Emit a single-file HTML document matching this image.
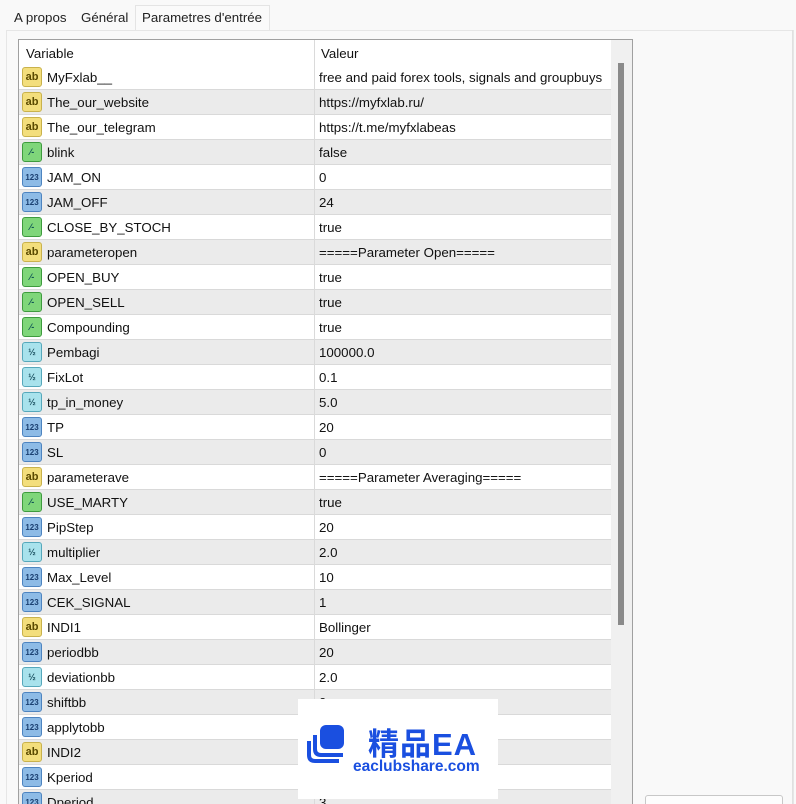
<!DOCTYPE html>
<html><head><meta charset="utf-8"><style>
*{margin:0;padding:0;box-sizing:border-box}
html,body{width:796px;height:804px;overflow:hidden}
body{background:#f9f9f9;font-family:"Liberation Sans","Noto Sans CJK SC",sans-serif;font-size:13.3px;color:#111;position:relative}
.tabs{position:absolute;left:0;top:0;width:796px;height:31px;background:#f9f9f9}
.tab{position:absolute;top:10px;font-size:13.3px;color:#222}
.tab.act{top:5px;height:26px;left:135px;width:135px;background:#fafafa;border:1px solid #e4e4e4;border-bottom:none;padding:4px 0 0 6px}
.panel{position:absolute;left:6px;top:30px;width:788px;height:800px;border:1px solid #e6e6e6;background:#f9f9f9}
.tbl{position:absolute;left:18px;top:39px;width:615px;height:800px;border:1px solid #a0a0a0;background:#fff;overflow:hidden}
.hdr{position:absolute;left:0;top:0;width:592px;height:25px;background:#fff}
.hdr span{position:absolute;top:6px}
.row{position:absolute;left:0;width:592px;height:25px;border-bottom:1px solid #d9d9d9}
.row.g{background:#ebebeb}
.row .n{position:absolute;left:28px;top:5px}
.row .v{position:absolute;left:300px;top:5px}
.vl{position:absolute;left:295px;top:0;width:1px;height:800px;background:#dadada}
.ic{position:absolute;left:3px;top:2px;width:20px;height:20px;border-radius:3px;font-size:9px;font-weight:bold;text-align:center;line-height:19px}
.a{background:#f3de7c;border:1px solid #c9b24c;color:#5a4a00;font-size:11px}
.b{background:#7fd67a;border:1px solid #3e9b3e;color:#155}
.i{background:#8dbbe6;border:1px solid #4d84c0;color:#1a3f70;font-size:8px}
.d{background:#a8e2ec;border:1px solid #56a8bb;color:#1a5060;font-size:9px}
.sb{position:absolute;left:592px;top:0;width:21px;height:800px;background:#f0f0f0}
.th{position:absolute;left:7px;top:23px;width:6px;height:562px;background:#8a8a8a}
.right{position:absolute;left:792px;top:30px;width:1px;height:774px;background:#e0e0e0}
.btn{position:absolute;left:645px;top:795px;width:138px;height:20px;border:1px solid #c8c8c8;border-radius:3px;background:#fdfdfd}
.wm{position:absolute;left:298px;top:699px;width:200px;height:100px;background:#fff}
.wm .t1{position:absolute;left:70px;top:20px;font-size:31px;font-weight:bold;color:#1a4fe0;letter-spacing:1px}
.wm .t2{position:absolute;left:55px;top:59px;font-size:15.5px;font-weight:bold;color:#1a4fe0}
</style></head><body>
<div class="tabs">
<span class="tab" style="left:14px">A propos</span>
<span class="tab" style="left:81px">Général</span>
<div class="tab act">Parametres d'entrée</div>
</div>
<div class="panel"></div>
<div class="right"></div>
<div class="tbl">
<div class="hdr"><span style="left:7px">Variable</span><span style="left:302px">Valeur</span></div>
<div class="row" style="top:25px"><div class="ic a">ab</div><span class="n">MyFxlab__</span><span class="v">free and paid forex tools, signals and groupbuys</span></div>
<div class="row g" style="top:50px"><div class="ic a">ab</div><span class="n">The_our_website</span><span class="v">https://myfxlab.ru/</span></div>
<div class="row" style="top:75px"><div class="ic a">ab</div><span class="n">The_our_telegram</span><span class="v">https://t.me/myfxlabeas</span></div>
<div class="row g" style="top:100px"><div class="ic b">⁄‐</div><span class="n">blink</span><span class="v">false</span></div>
<div class="row" style="top:125px"><div class="ic i">123</div><span class="n">JAM_ON</span><span class="v">0</span></div>
<div class="row g" style="top:150px"><div class="ic i">123</div><span class="n">JAM_OFF</span><span class="v">24</span></div>
<div class="row" style="top:175px"><div class="ic b">⁄‐</div><span class="n">CLOSE_BY_STOCH</span><span class="v">true</span></div>
<div class="row g" style="top:200px"><div class="ic a">ab</div><span class="n">parameteropen</span><span class="v">=====Parameter Open=====</span></div>
<div class="row" style="top:225px"><div class="ic b">⁄‐</div><span class="n">OPEN_BUY</span><span class="v">true</span></div>
<div class="row g" style="top:250px"><div class="ic b">⁄‐</div><span class="n">OPEN_SELL</span><span class="v">true</span></div>
<div class="row" style="top:275px"><div class="ic b">⁄‐</div><span class="n">Compounding</span><span class="v">true</span></div>
<div class="row g" style="top:300px"><div class="ic d">½</div><span class="n">Pembagi</span><span class="v">100000.0</span></div>
<div class="row" style="top:325px"><div class="ic d">½</div><span class="n">FixLot</span><span class="v">0.1</span></div>
<div class="row g" style="top:350px"><div class="ic d">½</div><span class="n">tp_in_money</span><span class="v">5.0</span></div>
<div class="row" style="top:375px"><div class="ic i">123</div><span class="n">TP</span><span class="v">20</span></div>
<div class="row g" style="top:400px"><div class="ic i">123</div><span class="n">SL</span><span class="v">0</span></div>
<div class="row" style="top:425px"><div class="ic a">ab</div><span class="n">parameterave</span><span class="v">=====Parameter Averaging=====</span></div>
<div class="row g" style="top:450px"><div class="ic b">⁄‐</div><span class="n">USE_MARTY</span><span class="v">true</span></div>
<div class="row" style="top:475px"><div class="ic i">123</div><span class="n">PipStep</span><span class="v">20</span></div>
<div class="row g" style="top:500px"><div class="ic d">½</div><span class="n">multiplier</span><span class="v">2.0</span></div>
<div class="row" style="top:525px"><div class="ic i">123</div><span class="n">Max_Level</span><span class="v">10</span></div>
<div class="row g" style="top:550px"><div class="ic i">123</div><span class="n">CEK_SIGNAL</span><span class="v">1</span></div>
<div class="row" style="top:575px"><div class="ic a">ab</div><span class="n">INDI1</span><span class="v">Bollinger</span></div>
<div class="row g" style="top:600px"><div class="ic i">123</div><span class="n">periodbb</span><span class="v">20</span></div>
<div class="row" style="top:625px"><div class="ic d">½</div><span class="n">deviationbb</span><span class="v">2.0</span></div>
<div class="row g" style="top:650px"><div class="ic i">123</div><span class="n">shiftbb</span><span class="v">0</span></div>
<div class="row" style="top:675px"><div class="ic i">123</div><span class="n">applytobb</span><span class="v">0</span></div>
<div class="row g" style="top:700px"><div class="ic a">ab</div><span class="n">INDI2</span><span class="v">Stochastic</span></div>
<div class="row" style="top:725px"><div class="ic i">123</div><span class="n">Kperiod</span><span class="v">5</span></div>
<div class="row g" style="top:750px"><div class="ic i">123</div><span class="n">Dperiod</span><span class="v">3</span></div>
<div class="vl"></div>
<div class="sb"><div class="th"></div></div>
</div>
<div class="btn"></div>
<div class="wm">
<svg style="position:absolute;left:5px;top:22px" width="46" height="46" viewBox="0 0 46 46">
<path d="M6 20 L6 34 Q6 40 12 40 L36 40" fill="none" stroke="#1a4fe0" stroke-width="4"/>
<path d="M12 14 L12 28 Q12 34 18 34 L40 34" fill="none" stroke="#1a4fe0" stroke-width="4"/>
<rect x="17" y="4" width="24" height="24" rx="6" fill="#1a4fe0"/>
</svg>
<div class="t1">精品EA</div>
<div class="t2">eaclubshare.com</div>
</div>
</body></html>
